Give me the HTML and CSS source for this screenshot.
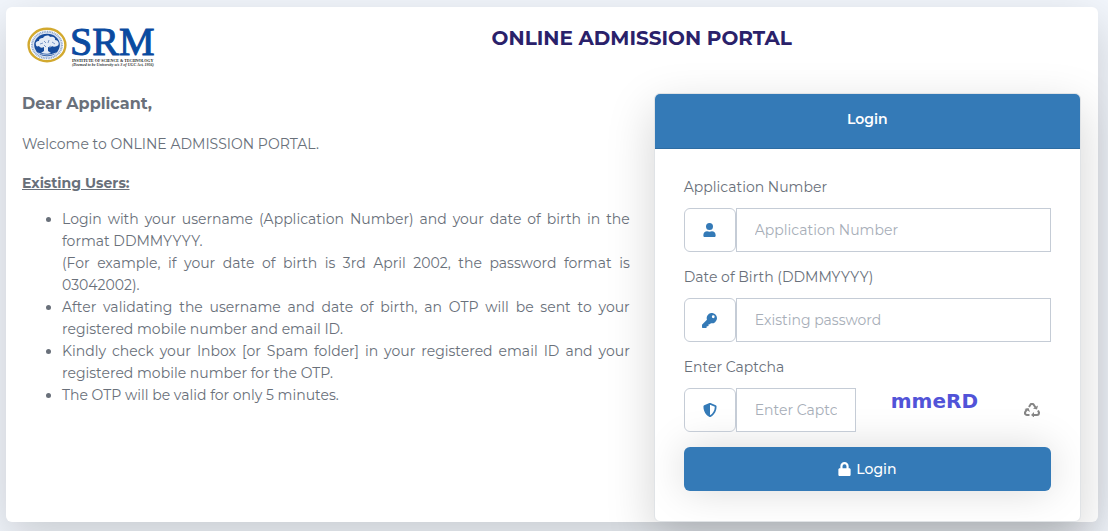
FILE: index.html
```html
<!DOCTYPE html>
<html lang="en">
<head>
    <meta charset="UTF-8">
    <meta name="viewport" content="width=device-width, initial-scale=1.0">
    <title>Online Admission Portal</title>
    <link rel="stylesheet" href="styles.css">
</head>
<body>
    <main class="page-card">
        <header class="page-header">
            <div class="logo">
                <svg width="134" height="42" viewBox="0 0 134 42" role="img" aria-label="SRM Institute of Science and Technology">
                    <!-- seal -->
                    <ellipse cx="20" cy="18" rx="18.4" ry="16.2" fill="#fff" stroke="#d2a92f" stroke-width="2.4"/>
                    <ellipse cx="20" cy="18" rx="15" ry="13.3" fill="#dfe6f2" stroke="#8da7cf" stroke-width="2" stroke-dasharray="1 .7"/>
                    <ellipse cx="20" cy="18" rx="12.8" ry="11.3" fill="#174c9d"/>
                    <path d="M9 18c-1-3 1-4 3-4 0-3 3-3 4-3 2-3 6-3 7-1 3-1 6 1 5 3 4 0 5 5 2 6-2 1-4 1-5 0-1 2-3 1-4 1v4l3 2c-2 1-7 1-10 0l3-2v-4c-2 1-4 1-5-1-2 1-3 0-3-1z" fill="#e4ebf6"/>
                    <path d="M13 17l3-1m1-2l2 2m3-3l-1 3m4-1l3 2m-11 1l2 2m5-1l-2 1" stroke="#5f83bd" stroke-width=".8" fill="none"/>
                    <path d="M11 26q9 4 18 0" stroke="#b9c9e2" fill="none"/>
                    <text class="logo-name" x="43" y="28">SRM</text>
                    <text class="logo-line" x="45" y="35">INSTITUTE OF SCIENCE &amp; TECHNOLOGY</text>
                    <text class="logo-note" x="45" y="39">(Deemed to be University u/s 3 of UGC Act, 1956)</text>
                </svg>
            </div>
            <h1 class="title">ONLINE ADMISSION PORTAL</h1>
        </header>

        <div class="content">
            <section class="intro">
                <h2>Dear Applicant,</h2>
                <p>Welcome to ONLINE ADMISSION PORTAL.</p>
                <h3>Existing Users:</h3>
                <ul>
                    <li>Login with your username (Application Number) and your date of birth in the format DDMMYYYY.
                        <div>(For example, if your date of birth is 3rd April 2002, the password format is 03042002).</div></li>
                    <li>After validating the username and date of birth, an OTP will be sent to your registered mobile number and email ID.</li>
                    <li>Kindly check your Inbox [or Spam folder] in your registered email ID and your registered mobile number for the OTP.</li>
                    <li>The OTP will be valid for only 5 minutes.</li>
                </ul>
            </section>

            <section class="login">
                <div class="login-card">
                    <h2 class="login-header">Login</h2>
                    <form class="login-body">
                        <label for="appno">Application Number</label>
                        <div class="input-group">
                            <span class="addon">
                                <svg width="13" height="14" viewBox="0 0 448 512"><path d="M224 256a128 128 0 1 0 0-256 128 128 0 0 0 0 256zm-90 48C60 304 0 364 0 438v26c0 27 21 48 48 48h352c27 0 48-21 48-48v-26c0-74-60-134-134-134-55 22-125 22-180 0z"/></svg>
                            </span>
                            <input type="text" id="appno" placeholder="Application Number">
                        </div>

                        <label for="dob">Date of Birth (DDMMYYYY)</label>
                        <div class="input-group">
                            <span class="addon">
                                <svg width="15" height="15" viewBox="0 0 512 512"><path d="M512 176a176 176 0 0 1-210 173l-24 27a24 24 0 0 1-18 8h-36v40a24 24 0 0 1-24 24h-40v40a24 24 0 0 1-24 24H24a24 24 0 0 1-24-24v-78a24 24 0 0 1 7-17l162-162A176 176 0 1 1 512 176zm-176-48a48 48 0 1 0 96 0 48 48 0 0 0-96 0z"/></svg>
                            </span>
                            <input type="password" id="dob" placeholder="Existing password">
                        </div>

                        <label for="captcha">Enter Captcha</label>
                        <div class="captcha-row">
                            <div class="input-group">
                                <span class="addon">
                                    <svg width="14" height="14" viewBox="0 0 512 512"><path d="M466 84L274 4a48 48 0 0 0-37 0L45 84a48 48 0 0 0-29 44c0 198 114 335 221 380a48 48 0 0 0 37 0c86-36 222-159 222-380a48 48 0 0 0-30-44zM256 446V66l176 73c-4 151-82 262-176 307z"/></svg>
                                </span>
                                <input type="text" id="captcha" placeholder="Enter Captcha">
                            </div>
                            <span class="captcha-code">mmeRD</span>
                            <button type="button" class="refresh" aria-label="Reload captcha">
                                <svg width="16" height="14" viewBox="0 0 32 28" fill="none" stroke="#858585" stroke-width="4">
                                    <path d="M10 8l3-5q3-3 6 0l4 6"/>
                                    <path d="M28 15l2 4q0 5-4 5h-7"/>
                                    <path d="M11 24H6q-5-1-4-5l4-7"/>
                                    <path d="M18 11l8 2 2-8zM20 18v11l-6-5zM1 12l8-2 3 8z" fill="#858585" stroke="none"/>
                                </svg>
                            </button>
                        </div>

                        <button type="submit" class="btn-login">
                            <svg width="13" height="14" viewBox="0 0 448 512"><path d="M400 224h-24v-72a152 152 0 0 0-304 0v72H48c-27 0-48 21-48 48v192c0 27 21 48 48 48h352c27 0 48-21 48-48V272c0-27-21-48-48-48zm-104 0H152v-72a72 72 0 0 1 144 0z"/></svg>
                            Login
                        </button>
                    </form>
                </div>
            </section>
        </div>
    </main>
</body>
</html>
```
FILE: styles.css
```css
* {
    box-sizing: border-box;
}
body {
    margin: 0;
    padding: 7px 10px 9px 6px;
    background-color: #f2f6fc;
    color: #69707a;
    font-family: Metropolis, Montserrat, Inter, sans-serif;
    font-size: 14px;
    line-height: 22px;
}
h1, h2, h3, p, ul {
    margin: 0;
}
.page-card {
    padding: 0 5px 0 4px;
    background-color: #fff;
    border-radius: 6px;
    box-shadow: 0 16px 48px rgba(0, 0, 0, 0.175);
}
.page-header {
    display: grid;
    grid-template-columns: 2fr 10fr;
    height: 86px;
}
.logo {
    padding: 20px 17px;
}
.logo svg {
    display: block;
    overflow: visible;
}
.logo text {
    font-family: "Liberation Serif", serif;
    font-weight: bold;
}
.logo .logo-name {
    font-size: 40px;
    font-weight: normal;
    fill: #0a4aa0;
    stroke: #0a4aa0;
    stroke-width: 1px;
}
.logo-line {
    font-size: 4px;
    fill: #222;
}
.logo-note {
    font-size: 4px;
    font-style: italic;
    fill: #333;
}
.title {
    padding-top: 17px;
    color: #2a216a;
    font-size: 20px;
    line-height: 28px;
    text-align: center;
}
.content {
    display: grid;
    grid-template-columns: 7fr 5fr;
}
.intro, .login {
    padding: 0 12px;
}
.intro h2 {
    font-size: 16px;
    margin-bottom: 18px;
}
.intro p {
    margin-bottom: 17px;
}
.intro h3 {
    font-size: 14px;
    text-decoration: underline;
    margin-bottom: 14px;
}
.intro ul {
    padding-left: 40px;
    text-align: justify;
}
.login-card {
    border: 1px solid #e0e3e6;
    border-radius: 6px;
    box-shadow: 0 16px 48px rgba(0, 0, 0, 0.175);
    background-color: #fff;
    overflow: hidden;
}
.login-header {
    padding: 14px;
    height: 55px;
    background-color: #347ab7;
    border-bottom: 1px solid #2d6ca2;
    color: #fff;
    font-size: 14px;
    font-weight: 600;
    text-align: center;
}
.login-body {
    padding: 27px 29px 30px;
}
.login-body label {
    display: block;
    margin-bottom: 10px;
}
.input-group {
    display: flex;
    height: 44px;
    margin-bottom: 14px;
}
.addon {
    display: flex;
    align-items: center;
    justify-content: center;
    flex: 0 0 52px;
    border: 1px solid #c5ccd6;
    border-radius: 6px;
}
.addon svg {
    fill: #347ab7;
}
.input-group input {
    flex: 1;
    min-width: 0;
    padding: 0 18px;
    border: 1px solid #c5ccd6;
    border-radius: 0;
    background-color: #fff;
    font: inherit;
}
.input-group input::placeholder {
    color: #a7aeb8;
    opacity: 1;
}
.captcha-row {
    display: grid;
    grid-template-columns: 172px 1fr 38px;
    margin-bottom: 1px;
}
.captcha-code {
    padding-top: 2px;
    color: #5153d8;
    font-family: "DejaVu Sans", sans-serif;
    font-size: 20px;
    font-weight: bold;
    text-align: center;
}
.refresh {
    padding: 0;
    border: none;
    background: none;
    cursor: pointer;
}
.refresh svg {
    display: block;
    margin: 0 auto 14px;
}
.btn-login {
    display: flex;
    align-items: center;
    justify-content: center;
    gap: 5px;
    width: 100%;
    height: 44px;
    border: none;
    border-radius: 6px;
    background-color: #347ab7;
    box-shadow: 0 0 40px rgba(0, 0, 0, 0.15);
    color: #fff;
    font: inherit;
    font-weight: 500;
    cursor: pointer;
}
.btn-login svg {
    fill: #fff;
}
```
